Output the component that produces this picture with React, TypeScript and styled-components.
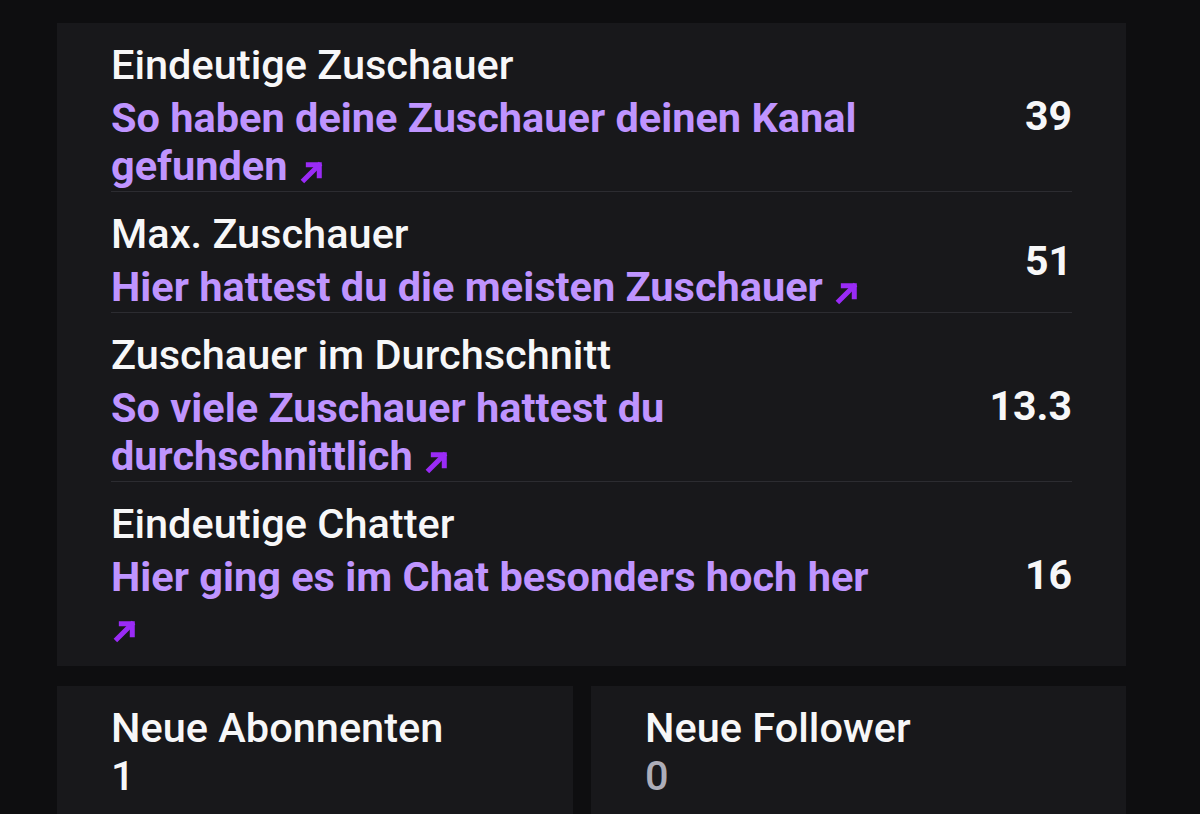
import React from "react";
import styled, { createGlobalStyle } from "styled-components";

const Global = createGlobalStyle`
  html, body { margin: 0; padding: 0; background: #0e0e10; }
  body { font-family: Roboto, "Noto Sans", "Liberation Sans", sans-serif; color: #efeff1; }
  * { box-sizing: border-box; }
`;

const Page = styled.div`
  width: 1200px;
  height: 814px;
  overflow: hidden;
  background: #0e0e10;
  padding: 23px 74px 0 57px;
  display: flex;
  flex-direction: column;
  gap: 20px;
`;

const Card = styled.section`
  background: #18181b;
  padding: 0 54px 17px;
  display: flex;
  flex-direction: column;
`;

const Row = styled.div<{ $last?: boolean }>`
  display: grid;
  grid-template-columns: minmax(0, 1fr) 196px;
  align-items: center;
  padding: 18px 0 ${(p) => (p.$last ? "0" : "1px")};
  border-bottom: ${(p) => (p.$last ? "none" : "1px solid #2c2c31")};
`;

const Texts = styled.div`
  display: flex;
  flex-direction: column;
  gap: 5px;
`;

const Title = styled.div`
  font-size: 41.5px;
  line-height: 48px;
  font-weight: 500;
  color: #f7f7f8;
`;

const Link = styled.a`
  font-size: 41.5px;
  line-height: 48px;
  font-weight: 700;
  color: #bf94ff;
  text-decoration: none;
`;

const Value = styled.div`
  justify-self: end;
  font-size: 41px;
  line-height: 48px;
  font-weight: 700;
  color: #f7f7f8;
`;

const ArrowSvg = styled.svg`
  width: 25px;
  height: 25px;
  vertical-align: -4px;
  margin-left: 2px;
`;

const Arrow = () => (
  <ArrowSvg viewBox="0 0 24 24" fill="none" stroke="#9a2bf6" strokeWidth="4.8" strokeLinecap="square">
    <path d="M4 20 L18 6" />
    <path d="M8 5.5 H18.5 V16" strokeLinejoin="miter" />
  </ArrowSvg>
);

const SmallRow = styled.div`
  display: grid;
  grid-template-columns: 516px 535px;
  gap: 18px;
  flex: 1;
`;

const StatCard = styled.div`
  background: #18181b;
  padding: 18px 54px 0;
  display: flex;
  flex-direction: column;
`;

const StatTitle = styled.div`
  font-size: 41.5px;
  line-height: 48px;
  font-weight: 500;
  color: #f7f7f8;
`;

const StatValue = styled.div<{ $muted?: boolean }>`
  font-size: 41.5px;
  line-height: 48px;
  font-weight: 500;
  color: ${(p) => (p.$muted ? "#adadb8" : "#f7f7f8")};
`;

const rows = [
  { title: "Eindeutige Zuschauer", link: "So haben deine Zuschauer deinen Kanal gefunden", value: "39" },
  { title: "Max. Zuschauer", link: "Hier hattest du die meisten Zuschauer", value: "51" },
  { title: "Zuschauer im Durchschnitt", link: "So viele Zuschauer hattest du durchschnittlich", value: "13.3" },
  { title: "Eindeutige Chatter", link: "Hier ging es im Chat besonders hoch her", value: "16" },
];

export default function App() {
  return (
    <>
      <Global />
      <Page>
        <Card>
          {rows.map((r, i) => (
            <Row key={r.title} $last={i === rows.length - 1}>
              <Texts>
                <Title>{r.title}</Title>
                <Link href="#">
                  {r.link} <Arrow />
                </Link>
              </Texts>
              <Value>{r.value}</Value>
            </Row>
          ))}
        </Card>
        <SmallRow>
          <StatCard>
            <StatTitle>Neue Abonnenten</StatTitle>
            <StatValue>1</StatValue>
          </StatCard>
          <StatCard>
            <StatTitle>Neue Follower</StatTitle>
            <StatValue $muted>0</StatValue>
          </StatCard>
        </SmallRow>
      </Page>
    </>
  );
}
